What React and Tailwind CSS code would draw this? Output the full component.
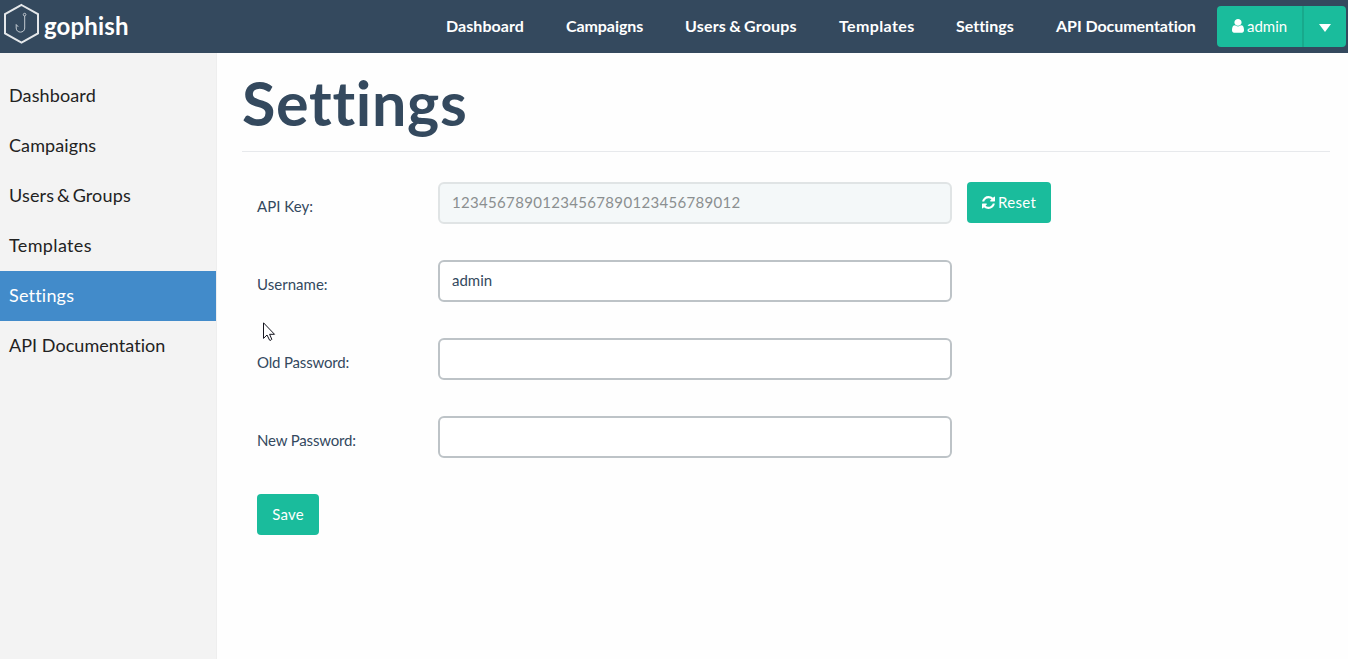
import React from "react";

const NAV = [
  { label: "Dashboard", top: "w-[78px] tracking-[0.06px]", side: "tracking-[0.12px]" },
  { label: "Campaigns", top: "w-[77px] tracking-[-0.08px]", side: "tracking-[0.1px]" },
  {
    label: "Users & Groups",
    top: "w-[112px] tracking-[0.2px] [word-spacing:-1px]",
    side: "tracking-[0.15px] [word-spacing:-2px]",
  },
  { label: "Templates", top: "w-[75px] tracking-[0.38px]", side: "tracking-[0.36px]" },
  { label: "Settings", top: "w-[58px] tracking-[0px]", side: "tracking-[0.2px]" },
  { label: "API Documentation", top: "w-[140px] tracking-[-0.05px]", side: "tracking-[0.05px]" },
];

function Logo() {
  return (
    <svg className="block h-[42px] w-[38px] shrink-0" viewBox="0 0 38 42" fill="none">
      <path d="M18.5 2L35 11.2V30.4L18.5 39.6L2 30.4V11.2Z" stroke="#e4e7ea" strokeWidth="2" />
      <circle cx="21.6" cy="11.6" r="1.3" stroke="#c3cad1" strokeWidth="1" />
      <path d="M21.7 13V25C21.7 30.5 13.2 30.5 13.2 25V21.5L15.2 23.8" stroke="#c3cad1" strokeWidth="1" />
    </svg>
  );
}

function UserIcon() {
  return (
    <svg className="h-[13.7px] w-[12px] shrink-0" viewBox="0 0 1280 1536" preserveAspectRatio="none" fill="currentColor">
      <path d="M1280 1271q0 109-62.5 187t-150.5 78h-854q-88 0-150.5-78t-62.5-187q0-85 8.5-160.5t31.5-152 58.5-131 94-89 134.5-34.5q131 128 313 128t313-128q76 0 134.5 34.5t94 89 58.5 131 31.5 152 8.5 160.5zM1024 384q0 159-112.5 271.5t-271.5 112.5-271.5-112.5-112.5-271.5 112.5-271.5 271.5-112.5 271.5 112.5 112.5 271.5z" />
    </svg>
  );
}

function RefreshIcon() {
  return (
    <svg className="h-[13px] w-[13px] shrink-0" viewBox="128 128 1536 1536" fill="currentColor">
      <path d="M1639 1056q0 5-1 7-64 268-268 434.5t-478 166.5q-146 0-282.5-55t-243.5-157l-129 129q-19 19-45 19t-45-19-19-45v-448q0-26 19-45t45-19h448q26 0 45 19t19 45-19 45l-137 137q71 66 161 102t187 36q134 0 250-65t186-179q11-17 53-117 8-23 30-23h192q13 0 22.5 9.5t9.5 22.5zm25-800v448q0 26-19 45t-45 19h-448q-26 0-45-19t-19-45 19-45l138-138q-148-137-349-137-134 0-250 65t-186 179q-11 17-53 117-8 23-30 23h-199q-13 0-22.5-9.5t-9.5-22.5v-7q65-268 270-434.5t480-166.5q146 0 284 55.5t245 156.5l130-129q19-19 45-19t45 19 19 45z" />
    </svg>
  );
}

function Field({ label, value = "", disabled = false, type = "text", children }) {
  return (
    <div className="mb-9 flex h-[42px] items-start">
      <label
        className={
          "w-[181px] pt-[12px] text-[15px] leading-[24px] " +
          (type === "password" ? "tracking-[-0.17px]" : "tracking-[0.03px]")
        }
      >
        {label}
      </label>
      <input
        type={type}
        defaultValue={value}
        disabled={disabled}
        className={
          "h-[42px] w-[514px] rounded-md border-2 px-3 pb-[2px] text-[15px] leading-[22px] outline-none " +
          (disabled
            ? "border-[#e0e4e5] bg-[#f4f8f9] tracking-[0.32px] text-[#8b8f90]"
            : "border-[#bdc3c7] bg-white text-[#34495e]")
        }
      />
      {children}
    </div>
  );
}

export default function App() {
  return (
    <div className="relative flex h-[659px] w-[1348px] flex-col overflow-hidden bg-[#fefefe] font-['Lato',sans-serif] text-[#34495e] [font-variant-ligatures:none]">
      <header className="flex h-[53px] shrink-0 items-start bg-[#34495e] text-white">
        <div className="flex w-[446px] items-start pl-[3px] pt-[3px]">
          <Logo />
          <span className="pl-[3px] pt-[7px] text-[24px] font-bold leading-[32px] tracking-[0.15px]">gophish</span>
        </div>
        <nav className="flex gap-[42px] pt-[14px]">
          {NAV.map((item) => (
            <a key={item.label} className={"whitespace-nowrap text-[16px] font-bold leading-[24px] " + item.top}>
              {item.label}
            </a>
          ))}
        </nav>
        <div className="ml-[21px] mt-[6px] flex h-[41px] overflow-hidden rounded bg-[#1abc9c]">
          <button className="flex w-[85px] items-center gap-[3px] pb-px pl-[15px] text-[15px] leading-[22px]">
            <UserIcon />
            admin
          </button>
          <button className="flex w-[44px] items-center justify-center border-l-2 border-[#18a98c]">
            <svg className="mt-[2px] h-2 w-3" viewBox="0 0 12 8" fill="currentColor">
              <path d="M0 0H12L6 8Z" />
            </svg>
          </button>
        </div>
      </header>
      <div className="flex flex-1">
        <aside className="w-[217px] border-r border-[#eeeeee] bg-[#f3f3f3] pt-[18px]">
          {NAV.map((item) => (
            <a
              key={item.label}
              className={
                "flex h-[50px] items-center pb-[2px] pl-[9px] text-[18px] leading-[30px] " +
                item.side +
                (item.label === "Settings" ? " bg-[#428bca] text-white" : " text-[#222222]")
              }
            >
              {item.label}
            </a>
          ))}
        </aside>
        <main className="flex-1 pl-[25px] pr-[18px]">
          <h1 className="h-[99px] border-b border-[#e7e9ec] pt-[16px] text-[61px] font-bold leading-[67px] tracking-[0.7px]">
            Settings
          </h1>
          <form className="pl-[15px] pt-[30px]">
            <Field label="API Key:" value="12345678901234567890123456789012" disabled>
              <button
                type="button"
                className="ml-[15px] flex h-[41px] w-[84px] items-center gap-[3px] rounded bg-[#1abc9c] pl-[15px] text-[15px] tracking-[0.3px] text-white"
              >
                <RefreshIcon />
                Reset
              </button>
            </Field>
            <Field label="Username:" value="admin" />
            <Field label="Old Password:" type="password" />
            <Field label="New Password:" type="password" />
            <button type="button" className="h-[41px] w-[62px] rounded bg-[#1abc9c] text-[15px] tracking-[0.2px] text-white">
              Save
            </button>
          </form>
        </main>
      </div>
      <svg className="absolute left-[263px] top-[322px] h-[20px] w-[13px]" viewBox="0 0 13 20">
        <path
          d="M.5 .8V16.4L4 13L6.6 18.2Q8 18.8 8.8 17.3L6.6 12.3H11.5Z"
          fill="#fff"
          stroke="#15151f"
          strokeWidth="1"
        />
      </svg>
    </div>
  );
}
